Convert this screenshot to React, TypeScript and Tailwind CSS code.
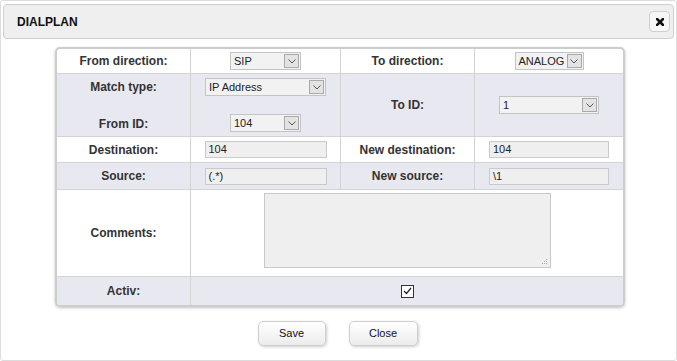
import React from "react";

const font = { fontFamily: '"Liberation Sans", Arial, sans-serif' };

function Select({ value, width }: { value: string; width: string }) {
  return (
    <div
      className={`flex h-[18px] items-stretch border border-[#c4c4c4] bg-[#f2f2f2] text-[11px] text-[#222] ${width}`}
    >
      <span className="flex flex-1 items-center whitespace-nowrap pl-[3px] leading-none">{value}</span>
      <span className="my-[1px] mr-[1px] flex w-[15px] shrink-0 items-center justify-center border border-[#a9a9a9] bg-[#e3e3e3]">
        <svg width="8" height="5" viewBox="0 0 8 5" fill="none">
          <path d="M0.5 0.5L4 4L7.5 0.5" stroke="#555" strokeWidth="1" />
        </svg>
      </span>
    </div>
  );
}

function TextInput({ value, width }: { value: string; width: string }) {
  return (
    <div
      className={`flex h-[17px] items-center border border-[#cacaca] bg-[#efefef] pl-[3px] text-[11px] leading-none text-[#222] ${width}`}
    >
      {value}
    </div>
  );
}

function Label({ children }: { children: React.ReactNode }) {
  return <span className="text-[12px] font-bold leading-[14px] text-[#333]">{children}</span>;
}

export default function App() {
  const cell = "flex items-center justify-center border-r border-b border-[#d3d3d3]";
  const last = "flex items-center justify-center border-b border-[#d3d3d3]";
  const lav = "bg-[#e8e8f0]";

  return (
    <div style={font} className="h-[361px] w-[677px] rounded-[3px] border border-[#dcdcdc] bg-white">
      {/* Header */}
      <div className="mx-[2px] mt-[3px] flex h-[35px] items-center justify-between rounded-[4px] border border-[#cfcfcf] bg-[#efefef] pl-[13px] pr-[3px]">
        <span className="text-[12px] font-bold text-[#111]">DIALPLAN</span>
        <button className="flex h-[21px] w-[21px] items-center justify-center rounded-[4px] border border-[#cfcfcf] bg-[#f6f6f6]">
          <svg width="8" height="8" viewBox="0 0 8 8">
            <path d="M1 1L7 7M7 1L1 7" stroke="#111" strokeWidth="2.6" strokeLinecap="square" />
          </svg>
        </button>
      </div>

      {/* Table */}
      <div className="ml-[54px] mt-[8px] w-[570px] overflow-hidden rounded-[5px] border-2 border-[#cdcdcd] shadow-[0_1px_3px_rgba(0,0,0,0.25)]">
        <div className="grid grid-cols-[134px_150px_134px_148px] grid-rows-[25px_63px_26px_27px_87px_28px]">
          {/* Row 1 */}
          <div className={cell}>
            <Label>From direction:</Label>
          </div>
          <div className={cell}>
            <Select value="SIP" width="w-[71px]" />
          </div>
          <div className={cell}>
            <Label>To direction:</Label>
          </div>
          <div className={last}>
            <Select value="ANALOG" width="w-[69px]" />
          </div>

          {/* Row 2 */}
          <div className="flex flex-col items-center justify-between border-r border-b border-[#d3d3d3] bg-[#e8e8f0] pt-[6px] pb-[5px]">
            <Label>Match type:</Label>
            <Label>From ID:</Label>
          </div>
          <div className="flex flex-col items-center justify-between border-r border-b border-[#d3d3d3] bg-[#e8e8f0] pt-[4px] pb-[4px]">
            <Select value="IP Address" width="w-[121px]" />
            <Select value="104" width="w-[71px]" />
          </div>
          <div className={`${cell} ${lav}`}>
            <Label>To ID:</Label>
          </div>
          <div className={`${last} ${lav}`}>
            <Select value="1" width="w-[100px]" />
          </div>

          {/* Row 3 */}
          <div className={cell}>
            <Label>Destination:</Label>
          </div>
          <div className={cell}>
            <TextInput value="104" width="w-[122px]" />
          </div>
          <div className={cell}>
            <Label>New destination:</Label>
          </div>
          <div className={last}>
            <TextInput value="104" width="w-[120px]" />
          </div>

          {/* Row 4 */}
          <div className={`${cell} ${lav}`}>
            <Label>Source:</Label>
          </div>
          <div className={`${cell} ${lav}`}>
            <TextInput value="(.*)" width="w-[122px]" />
          </div>
          <div className={`${cell} ${lav}`}>
            <Label>New source:</Label>
          </div>
          <div className={`${last} ${lav}`}>
            <TextInput value="\1" width="w-[120px]" />
          </div>

          {/* Row 5 */}
          <div className={cell}>
            <Label>Comments:</Label>
          </div>
          <div className="col-span-3 flex justify-center border-b border-[#d3d3d3] pt-[3px]">
            <div className="relative h-[75px] w-[287px] border border-[#c9c9c9] bg-[#efefef]">
              <svg className="absolute bottom-[2px] right-[2px]" width="7" height="7" viewBox="0 0 7 7">
                <rect x="5" y="1" width="1" height="1" fill="#aaa" />
                <rect x="3" y="3" width="1" height="1" fill="#aaa" />
                <rect x="5" y="3" width="1" height="1" fill="#aaa" />
                <rect x="1" y="5" width="1" height="1" fill="#aaa" />
                <rect x="3" y="5" width="1" height="1" fill="#aaa" />
                <rect x="5" y="5" width="1" height="1" fill="#aaa" />
              </svg>
            </div>
          </div>

          {/* Row 6 */}
          <div className="flex items-center justify-center border-r border-[#d3d3d3] bg-[#e8e8f0]">
            <Label>Activ:</Label>
          </div>
          <div className="col-span-3 flex items-center justify-center bg-[#e8e8f0]">
            <span className="flex h-[13px] w-[13px] items-center justify-center border border-[#333] bg-white">
              <svg width="9" height="8" viewBox="0 0 9 8" fill="none">
                <path d="M1 4L3.5 6.5L8 1" stroke="#222" strokeWidth="1.2" />
              </svg>
            </span>
          </div>
        </div>
      </div>

      {/* Buttons */}
      <div className="mt-[14px] flex justify-center gap-[23px] pr-[2px]">
        <button className="h-[25px] w-[68px] rounded-[5px] border border-[#cfcfcf] bg-gradient-to-b from-white to-[#ececec] text-[11px] text-[#111] shadow-[1px_1px_3px_rgba(0,0,0,0.2)]">
          Save
        </button>
        <button className="h-[25px] w-[69px] rounded-[5px] border border-[#cfcfcf] bg-gradient-to-b from-white to-[#ececec] text-[11px] text-[#111] shadow-[1px_1px_3px_rgba(0,0,0,0.2)]">
          Close
        </button>
      </div>
    </div>
  );
}
